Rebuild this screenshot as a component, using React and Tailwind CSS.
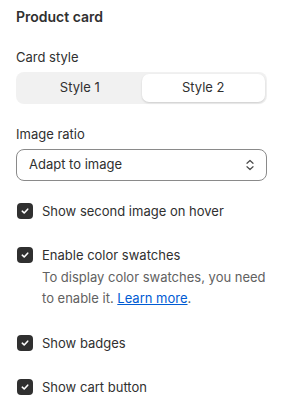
import React from "react";

function Check() {
  return (
    <span className="flex h-4 w-4 shrink-0 items-center justify-center rounded-[4px] bg-[#303030]">
      <svg width="10" height="10" viewBox="0 0 10 10" fill="none">
        <path d="M2.3 5.2 L4.2 7 L7.7 3.2" stroke="white" strokeWidth="1.6" strokeLinecap="round" strokeLinejoin="round" />
      </svg>
    </span>
  );
}

function CheckRow({ label, children }) {
  return (
    <div className="flex gap-[10px] pl-[1px]">
      <div className="flex h-5 items-center">
        <Check />
      </div>
      <div className="-ml-[1px]">
        <div className="text-[13px] leading-5 text-[#303030]">{label}</div>
        {children}
      </div>
    </div>
  );
}

export default function App() {
  return (
    <div
      className="w-[283px] h-[409px] bg-white px-4 pt-[7px]"
      style={{ fontFamily: "Inter, 'Noto Sans', sans-serif" }}
    >
      <div className="text-[14px] leading-5 font-semibold text-[#303030]">Product card</div>

      <div className="mt-5 text-[13px] leading-5 text-[#303030]">Card style</div>
      <div className="mt-[5px] flex h-8 rounded-lg bg-[#f1f1f1] p-[2px]">
        <div className="flex flex-1 items-center justify-center text-[13px] text-[#303030]">Style 1</div>
        <div className="flex flex-1 items-center justify-center rounded-[7px] bg-white text-[13px] text-[#303030] shadow-[0_1px_2px_rgba(0,0,0,0.15)]">
          Style 2
        </div>
      </div>

      <div className="mt-5 text-[13px] leading-5 text-[#303030]">Image ratio</div>
      <div className="mt-[5px] flex h-8 items-center justify-between rounded-lg border border-[#8a8a8a] pl-3 pr-[11px]">
        <span className="text-[13px] text-[#303030]">Adapt to image</span>
        <svg width="10" height="14" viewBox="0 0 10 14" fill="none">
          <path d="M2 5.3 L5 2.5 L8 5.3" stroke="#4a4a4a" strokeWidth="1.2" strokeLinecap="round" strokeLinejoin="round" />
          <path d="M2 8.7 L5 11.5 L8 8.7" stroke="#4a4a4a" strokeWidth="1.2" strokeLinecap="round" strokeLinejoin="round" />
        </svg>
      </div>

      <div className="mt-5 flex flex-col gap-6">
        <CheckRow label="Show second image on hover" />
        <CheckRow label="Enable color swatches">
          <div className="mt-[2px] text-[13px] leading-[21px] text-[#616161]">
            To display color swatches, you need to enable it.{" "}
            <span className="whitespace-nowrap">
              <a className="text-[#005bd3] underline" href="#">Learn more</a>.
            </span>
          </div>
        </CheckRow>
        <CheckRow label="Show badges" />
        <CheckRow label="Show cart button" />
      </div>
    </div>
  );
}
